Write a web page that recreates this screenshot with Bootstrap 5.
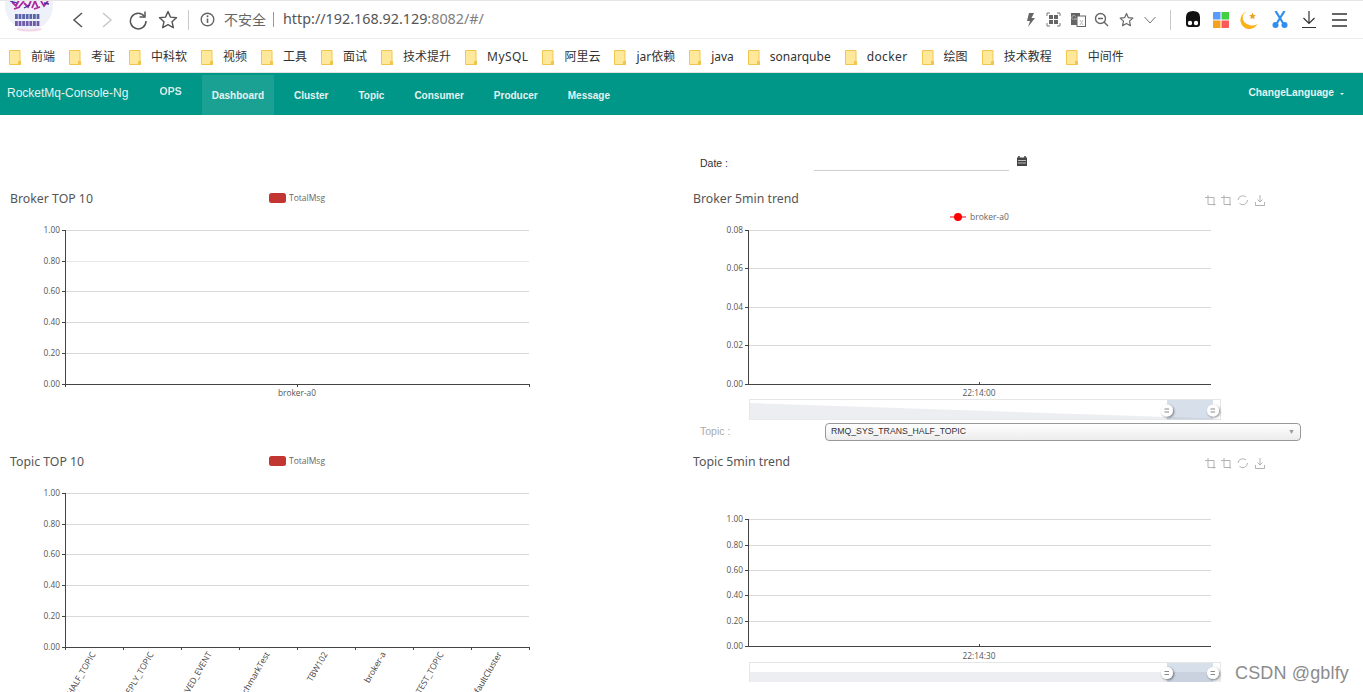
<!DOCTYPE html>
<html lang="zh">
<head>
<meta charset="utf-8">
<title>RocketMq-Console-Ng</title>
<link href="https://cdn.jsdelivr.net/npm/bootstrap@5.3.0/dist/css/bootstrap.min.css" rel="stylesheet">
<style>
html,body{height:692px;overflow:hidden;background:#fff}
body{font-family:"Noto Sans","Noto Sans CJK SC",sans-serif;color:#333}
.page-wrap{height:692px;overflow:hidden}
.tool-bar{height:39px;border-top:1px solid #e6e6e6;border-bottom:1px solid #ececec;background:#fff;overflow:hidden}
.avatar-svg{margin-top:-1px;margin-left:4px;flex:none}
.tool-ico{flex:none;display:block}
.sep-v{width:1px;height:20px;background:#c9c9c9;flex:none}
.sec-label{font-size:14px;color:#666;margin-left:9px;line-height:1}
.url-sep{width:1px;height:15px;background:#999;margin:0 9px 0 7px;flex:none}
.url-text{font-size:14.35px;color:#555;line-height:1}
.url-dim{color:#808080}
.mark-bar{height:34px;padding:3px 0 0 9px;gap:14px;background:#fff;border-bottom:1px solid #e2e2e2}
.mark-item{gap:10px;font-size:12px;color:#333;line-height:1;white-space:nowrap}
.mark-wide{letter-spacing:.4px}
.app-nav{height:42px;background:#009688;padding:0 0 0 7px;font-family:"Liberation Sans",sans-serif;font-weight:400}
.app-brand{font-size:12px;color:#e3f3f1;margin-right:31px;line-height:1;position:relative;top:-1px}
.app-ops{font-size:10.6px;color:#e9f6f4;margin-right:20px;position:relative;top:-2px;font-weight:700;opacity:.9}
.app-link{font-size:10px;font-weight:700;color:#e3f3f1;padding:0 10px;height:40px;margin-top:2px;margin-right:10px;text-decoration:none;display:flex;align-items:center}
.app-link.is-on{background:#1aa194}
.app-lang{font-size:10.2px;font-weight:700;color:#e3f3f1;margin-right:19px;position:relative;top:-1px}
.caret-mini{display:inline-block;border:2.5px solid transparent;border-top-color:#e3f3f1;border-bottom:0;margin-left:6px;vertical-align:middle}
.date-zone{height:72px;font-family:"Liberation Sans",sans-serif;font-size:10.5px;color:#333}
.date-label{margin-left:700px;width:114px;padding-top:42px;line-height:1.3}
.date-line{width:195px;height:56px;border-bottom:1px solid #cfcfcf;flex:none}
.cal-ico{margin:41px 0 0 8px;flex:none}
.pane-left{width:683px;flex:none}
.pane-right{width:680px;flex:none}
.pane-left svg,.pane-right svg{display:block}
.chart-title{font-family:"Noto Sans","Noto Sans CJK SC",sans-serif;font-size:12.3px;fill:#555}
.tick-t{font-family:"Open Sans",sans-serif;font-size:8.3px;fill:#555}
.leg-t{font-family:"Open Sans",sans-serif;font-size:8.5px;fill:#666}
.rot-t{font-family:"Open Sans",sans-serif;font-size:8.5px;fill:#444}
.topic-row{height:21px;font-family:"Liberation Sans",sans-serif}
.topic-label{margin-left:17px;width:125px;color:#aaa;line-height:1;font-size:10.5px}
.topic-select{width:476px;height:18px;padding:0 5px;border:1px solid #999;border-radius:4px;background:linear-gradient(#fff,#ececec);color:#333;line-height:1;font-size:8.7px}
.topic-arrow{color:#999;font-size:7px}
.water-mark{position:absolute;left:1235px;top:663px;font-family:"Liberation Sans",sans-serif;font-size:18px;color:#8c8c8c;line-height:1.2;letter-spacing:.15px}
</style>
</head>
<body>
<div class="page-wrap position-relative">

<div class="tool-bar d-flex align-items-center">
  <svg class="avatar-svg" width="50" height="38" viewBox="4 0 50 38">
    <circle cx="29" cy="6" r="24" fill="#eef1fa"/>
    <path d="M12 2l4 4 3-6M19 7l5-6M24 3l4 4 3-6M32 8l3-7 3 7M41 1l3 5 4-5M14 9l6-2M34 9l6-2" fill="none" stroke="#b0269a" stroke-width="1.8"/>
    <path d="M10 1l7 2M24 8l6-3M44 3l5 1" fill="none" stroke="#3a2fa8" stroke-width="1.3"/>
    <path d="M15 16.500h25" fill="none" stroke="#5a65a8" stroke-width="5" stroke-dasharray="2.800 .8"/>
    <path d="M15 23.500h25" fill="none" stroke="#6d5aa8" stroke-width="5" stroke-dasharray="2.800 .8"/>
    <path d="M17 29q12 3 24 0" fill="none" stroke="#f3d4e4" stroke-width="2"/>
  </svg>
  <svg class="tool-ico" width="14" height="18" viewBox="0 0 14 18" style="margin-left:16px"><path d="M12 2L4 9l8 7" fill="none" stroke="#555" stroke-width="1.5"/></svg>
  <svg class="tool-ico" width="14" height="18" viewBox="0 0 14 18" style="margin-left:17px"><path d="M2 2l8 7-8 7" fill="none" stroke="#c8c8c8" stroke-width="1.5"/></svg>
  <svg class="tool-ico" width="20" height="20" viewBox="0 0 20 20" style="margin-left:13px"><path d="M16.500 6.500A7.800 7.800 0 1 0 18 11" fill="none" stroke="#555" stroke-width="1.5"/><path d="M17 1.500v5.500h-5.500" fill="none" stroke="#555" stroke-width="1.500"/></svg>
  <svg class="tool-ico" width="20" height="19" viewBox="0 0 20 19" style="margin-left:10px"><path d="M10 1.500l2.500 5.600 6 .6-4.500 4 1.300 6L10 14.700l-5.300 3 1.300-6-4.500-4 6-.6z" fill="none" stroke="#555" stroke-width="1.4" stroke-linejoin="round"/></svg>
  <div class="sep-v" style="margin-left:10px"></div>
  <svg class="tool-ico" width="15" height="15" viewBox="0 0 15 15" style="margin-left:11px"><circle cx="7.500" cy="7.500" r="6.300" fill="none" stroke="#666" stroke-width="1.400"/><path d="M7.500 6.500v4.500" stroke="#666" stroke-width="1.600"/><circle cx="7.500" cy="4.300" r="1" fill="#666"/></svg>
  <span class="sec-label">不安全</span>
  <div class="url-sep"></div>
  <span class="url-text">http://192.168.92.129<span class="url-dim">:8082/#/</span></span>
  <div class="ms-auto d-flex align-items-center">
    <svg class="tool-ico" width="12" height="16" viewBox="0 0 12 16"><path d="M8 1H4L2 9h3l-2 6 7-9H6.500L9 1z" fill="#666"/></svg>
    <svg class="tool-ico" width="15" height="15" viewBox="0 0 15 15" style="margin-left:9px"><path d="M1 4V1h3M11 1h3v3M14 11v3h-3M4 14H1v-3" fill="none" stroke="#777"/><rect x="3" y="3" width="4" height="4" fill="#666"/><rect x="8" y="3" width="4" height="4" fill="#666"/><rect x="3" y="8" width="4" height="4" fill="#666"/><rect x="8" y="8" width="4" height="4" fill="#666"/></svg>
    <svg class="tool-ico" width="15" height="15" viewBox="0 0 15 15" style="margin-left:10px"><rect x="0" y="1" width="9" height="12" fill="#666"/><rect x="6" y="4" width="8.500" height="10.500" fill="#fff" stroke="#666"/><path d="M2.500 7.500a2 2 0 1 1 2-3M3 7h3M9 8l3 5M12 8l-3 5" fill="none" stroke="#bbb" stroke-width="1"/></svg>
    <svg class="tool-ico" width="15" height="15" viewBox="0 0 15 15" style="margin-left:8px"><circle cx="6.500" cy="6.500" r="5" fill="none" stroke="#666" stroke-width="1.400"/><path d="M4 6.500h5M10 10l4 4" stroke="#666" stroke-width="1.400"/></svg>
    <svg class="tool-ico" width="15" height="15" viewBox="0 0 20 19" style="margin-left:10px"><path d="M10 1.500l2.500 5.600 6 .6-4.500 4 1.300 6L10 14.700l-5.300 3 1.300-6-4.500-4 6-.6z" fill="none" stroke="#666" stroke-width="1.600" stroke-linejoin="round"/></svg>
    <svg class="tool-ico" width="12" height="8" viewBox="0 0 12 8" style="margin-left:10px"><path d="M.5 1l5.500 6 5.500-6" fill="none" stroke="#777"/></svg>
    <div class="sep-v" style="margin-left:14px"></div>
    <svg class="tool-ico" width="14" height="17" viewBox="0 0 14 17" style="margin-left:15px"><path d="M0 6q0-6 7-6t7 6v7q0 3-3 3H3q-3 0-3-3z" fill="#111"/><circle cx="4" cy="12" r="2.200" fill="#fff"/><circle cx="10" cy="12" r="2.200" fill="#fff"/></svg>
    <svg class="tool-ico" width="16" height="16" viewBox="0 0 16 16" style="margin-left:13px"><path d="M1 0h6.500v7.500H0V1a1 1 0 0 1 1-1z" fill="#5c9bf6"/><rect x="8.500" y="0" width="7.500" height="7.500" fill="#3fd13f"/><rect x="0" y="8.500" width="7.500" height="7.500" fill="#f5a01e"/><path d="M8.500 8.500H16V15a1 1 0 0 1-1 1H8.500z" fill="#fb5a5a"/></svg>
    <svg class="tool-ico" width="18" height="18" viewBox="0 0 18 18" style="margin-left:11px"><path d="M6.500 0.500a9 9 0 1 0 11 12.500A9 7.500 0 0 1 6.500 0.500z" fill="#fdb017"/><path d="M12.500 1.500l1 2.500 2.500.2-2 1.600.7 2.500-2.200-1.400-2.200 1.400.7-2.500-2-1.600 2.500-.2z" fill="#f0a020"/></svg>
    <svg class="tool-ico" width="16" height="18" viewBox="0 0 16 18" style="margin-left:14px"><path d="M3.500 0L11 12M12.500 0L5 12" stroke="#2f8fee" stroke-width="2.200"/><circle cx="3.500" cy="14" r="3" fill="#2f8fee"/><circle cx="12.500" cy="14" r="3" fill="#2f8fee"/></svg>
    <svg class="tool-ico" width="16" height="18" viewBox="0 0 16 18" style="margin-left:13px"><path d="M8 0v12M2.500 7l5.500 5.500L13.500 7M1 16.500h14" fill="none" stroke="#333" stroke-width="1.200"/></svg>
    <svg class="tool-ico" width="15" height="14" viewBox="0 0 15 14" style="margin-left:15px;margin-right:16px"><path d="M0 1h15M0 7h15M0 13h15" stroke="#333" stroke-width="1.300"/></svg>
  </div>
</div>

<div class="mark-bar d-flex align-items-center">
  <div class="mark-item d-flex align-items-center"><svg width="12" height="15" viewBox="0 0 12 15"><use href="#fold"/></svg><span>前端</span></div>
  <div class="mark-item d-flex align-items-center"><svg width="12" height="15" viewBox="0 0 12 15"><use href="#fold"/></svg><span>考证</span></div>
  <div class="mark-item d-flex align-items-center"><svg width="12" height="15" viewBox="0 0 12 15"><use href="#fold"/></svg><span>中科软</span></div>
  <div class="mark-item d-flex align-items-center"><svg width="12" height="15" viewBox="0 0 12 15"><use href="#fold"/></svg><span>视频</span></div>
  <div class="mark-item d-flex align-items-center"><svg width="12" height="15" viewBox="0 0 12 15"><use href="#fold"/></svg><span>工具</span></div>
  <div class="mark-item d-flex align-items-center"><svg width="12" height="15" viewBox="0 0 12 15"><use href="#fold"/></svg><span>面试</span></div>
  <div class="mark-item d-flex align-items-center"><svg width="12" height="15" viewBox="0 0 12 15"><use href="#fold"/></svg><span>技术提升</span></div>
  <div class="mark-item d-flex align-items-center"><svg width="12" height="15" viewBox="0 0 12 15"><use href="#fold"/></svg><span class="mark-wide">MySQL</span></div>
  <div class="mark-item d-flex align-items-center"><svg width="12" height="15" viewBox="0 0 12 15"><use href="#fold"/></svg><span>阿里云</span></div>
  <div class="mark-item d-flex align-items-center"><svg width="12" height="15" viewBox="0 0 12 15"><use href="#fold"/></svg><span>jar依赖</span></div>
  <div class="mark-item d-flex align-items-center"><svg width="12" height="15" viewBox="0 0 12 15"><use href="#fold"/></svg><span>java</span></div>
  <div class="mark-item d-flex align-items-center"><svg width="12" height="15" viewBox="0 0 12 15"><use href="#fold"/></svg><span>sonarqube</span></div>
  <div class="mark-item d-flex align-items-center"><svg width="12" height="15" viewBox="0 0 12 15"><use href="#fold"/></svg><span class="mark-wide">docker</span></div>
  <div class="mark-item d-flex align-items-center"><svg width="12" height="15" viewBox="0 0 12 15"><use href="#fold"/></svg><span>绘图</span></div>
  <div class="mark-item d-flex align-items-center"><svg width="12" height="15" viewBox="0 0 12 15"><use href="#fold"/></svg><span>技术教程</span></div>
  <div class="mark-item d-flex align-items-center"><svg width="12" height="15" viewBox="0 0 12 15"><use href="#fold"/></svg><span>中间件</span></div>
</div>

<nav class="app-nav d-flex align-items-center">
  <span class="app-brand">RocketMq-Console-Ng</span>
  <span class="app-ops">OPS</span>
  <a class="app-link is-on" href="#">Dashboard</a>
  <a class="app-link" href="#">Cluster</a>
  <a class="app-link" href="#">Topic</a>
  <a class="app-link" href="#">Consumer</a>
  <a class="app-link" href="#">Producer</a>
  <a class="app-link" href="#">Message</a>
  <span class="app-lang ms-auto">ChangeLanguage<span class="caret-mini"></span></span>
</nav>

<div class="date-zone d-flex">
  <div class="date-label">Date :</div>
  <div class="date-line"></div>
  <svg class="cal-ico" width="10" height="10" viewBox="0 0 10 10"><rect x="0" y="1.500" width="10" height="8.500" fill="#444"/><path d="M2 0v2M8 0v2" stroke="#444" stroke-width="1.500"/><path d="M1 4.500h8M1 7h8" stroke="#ddd" stroke-width=".8"/></svg>
</div>

<div class="d-flex">
  <div class="pane-left">
    <svg width="683" height="263" viewBox="0 187 683 263">
      <text class="chart-title" x="10" y="202.500">Broker TOP 10</text>
      <rect x="269" y="193" width="17" height="10" rx="2.500" fill="#c23531"/>
      <text class="leg-t" x="289" y="200.500">TotalMsg</text>
      <g stroke="#d9d9d9"><path d="M65 230.500h464M65 291.500h464M65 322.500h464M65 353.500h464"/></g>
      <path d="M65 261.500h464" stroke="#e8e8e8"/>
      <path d="M65.500 230v155M65 384.500h464M62 230.500h3M62 261.500h3M62 291.500h3M62 322.500h3M62 353.500h3M62 384.500h3M65.500 384v3M297.500 384v3M529.500 384v3" stroke="#444" fill="none"/>
      <g text-anchor="end"><text class="tick-t" x="60" y="233">1.00</text><text class="tick-t" x="60" y="264">0.80</text><text class="tick-t" x="60" y="294">0.60</text><text class="tick-t" x="60" y="325">0.40</text><text class="tick-t" x="60" y="356">0.20</text><text class="tick-t" x="60" y="387">0.00</text></g>
      <text class="tick-t" x="297" y="395.500" text-anchor="middle">broker-a0</text>
    </svg>
    <svg width="683" height="242" viewBox="0 450 683 242">
      <text class="chart-title" x="10" y="465.500">Topic TOP 10</text>
      <rect x="269" y="456" width="17" height="10" rx="2.500" fill="#c23531"/>
      <text class="leg-t" x="289" y="463.500">TotalMsg</text>
      <g stroke="#d9d9d9"><path d="M65 493.500h464M65 524.500h464M65 554.500h464M65 585.500h464M65 616.500h464"/></g>
      <path d="M65.500 493v155M65 647.500h464M62 493.500h3M62 524.500h3M62 554.500h3M62 585.500h3M62 616.500h3M62 647.500h3M65.500 647v3M123.500 647v3M181.500 647v3M239.500 647v3M297.500 647v3M355.500 647v3M413.500 647v3M471.500 647v3M529.500 647v3" stroke="#444" fill="none"/>
      <g text-anchor="end"><text class="tick-t" x="60" y="496">1.00</text><text class="tick-t" x="60" y="527">0.80</text><text class="tick-t" x="60" y="557">0.60</text><text class="tick-t" x="60" y="588">0.40</text><text class="tick-t" x="60" y="619">0.20</text><text class="tick-t" x="60" y="650">0.00</text></g>
      <g text-anchor="end">
        <text class="rot-t" transform="translate(96 654) rotate(-60)">RMQ_SYS_TRANS_HALF_TOPIC</text>
        <text class="rot-t" transform="translate(154 654) rotate(-60)">DefaultCluster_REPLY_TOPIC</text>
        <text class="rot-t" transform="translate(212 654) rotate(-60)">OFFSET_MOVED_EVENT</text>
        <text class="rot-t" transform="translate(270 654) rotate(-60)">BenchmarkTest</text>
        <text class="rot-t" transform="translate(328 654) rotate(-60)">TBW102</text>
        <text class="rot-t" transform="translate(386 654) rotate(-60)">broker-a</text>
        <text class="rot-t" transform="translate(444 654) rotate(-60)">SELF_TEST_TOPIC</text>
        <text class="rot-t" transform="translate(502 654) rotate(-60)">DefaultCluster</text>
      </g>
    </svg>
  </div>

  <div class="pane-right">
    <svg width="680" height="234" viewBox="683 187 680 234">
      <defs>
        <symbol id="fold" viewBox="0 0 12 15"><path d="M.5.500h10.500v14H.5z" fill="#ffe89a" stroke="#f1c64e"/><rect x="9" y="11" width="3" height="4" fill="#f1c64e"/></symbol>
        <g id="tbx" fill="none" stroke="#aaa" stroke-width=".9">
          <path d="M1205 197.500h9v8M1208 195v9.500h7.500"/>
          <path d="M1221 197.500h9v8M1224 195v9.500h7"/>
          <path d="M1238 200a4.800 4.800 0 0 1 8-3M1247.500 200a4.800 4.800 0 0 1-8 3.500"/>
          <path d="M1260 195v7M1257.500 199.500l2.500 2.500 2.500-2.500M1255.500 202v3.500h9V202"/>
        </g>
        <filter id="hsh" x="-50%" y="-50%" width="200%" height="200%"><feDropShadow dx="1" dy="1" stdDeviation="1" flood-color="#000" flood-opacity=".5"/></filter>
      </defs>
      <text class="chart-title" x="693" y="202.500">Broker 5min trend</text>
      <use href="#tbx"/>
      <path d="M950 217h16" stroke="#f00"/><circle cx="958" cy="217" r="4" fill="#f00"/>
      <text class="leg-t" x="970" y="220">broker-a0</text>
      <g stroke="#d9d9d9"><path d="M748 230.500h463M748 268.500h463M748 307.500h463M748 345.500h463"/></g>
      <path d="M748.500 230v155M748 384.500h463M745 230.500h3M745 268.500h3M745 307.500h3M745 345.500h3M745 384.500h3M979.500 382v3" stroke="#444" fill="none"/>
      <g text-anchor="end"><text class="tick-t" x="743" y="233">0.08</text><text class="tick-t" x="743" y="271">0.06</text><text class="tick-t" x="743" y="310">0.04</text><text class="tick-t" x="743" y="348">0.02</text><text class="tick-t" x="743" y="387">0.00</text></g>
      <text class="tick-t" x="979" y="395.500" text-anchor="middle">22:14:00</text>
      <rect x="749.500" y="399.500" width="471" height="20" fill="#fff" stroke="#e6e6e6"/>
      <path d="M750 403L1167 417v2.500H750z" fill="#eceef1"/>
      <rect x="1167" y="400" width="46" height="19" fill="#d7dfea"/>
      <path d="M1167 417l46 1.500v1h-46z" fill="#c9d2de"/>
      <circle cx="1167" cy="410.500" r="6" fill="#fff" filter="url(#hsh)"/><path d="M1164.500 409h4.500M1164.500 412h4.500" stroke="#888"/>
      <circle cx="1213" cy="410.500" r="6" fill="#fff" filter="url(#hsh)"/><path d="M1210.500 409h4.500M1210.500 412h4.500" stroke="#888"/>
    </svg>
    <div class="topic-row d-flex align-items-center">
      <span class="topic-label">Topic :</span>
      <div class="topic-select d-flex align-items-center justify-content-between">
        <span>RMQ_SYS_TRANS_HALF_TOPIC</span><span class="topic-arrow">▼</span>
      </div>
    </div>
    <svg width="680" height="250" viewBox="683 442 680 250">
      <text class="chart-title" x="693" y="465.500">Topic 5min trend</text>
      <use href="#tbx" y="263"/>
      <g stroke="#d9d9d9"><path d="M748 519.500h463M748 545.500h463M748 570.500h463M748 595.500h463M748 621.500h463"/></g>
      <path d="M748.500 519v128M748 646.500h463M745 519.500h3M745 545.500h3M745 570.500h3M745 595.500h3M745 621.500h3M745 646.500h3M979.500 644v3" stroke="#444" fill="none"/>
      <g text-anchor="end"><text class="tick-t" x="743" y="522">1.00</text><text class="tick-t" x="743" y="548">0.80</text><text class="tick-t" x="743" y="573">0.60</text><text class="tick-t" x="743" y="598">0.40</text><text class="tick-t" x="743" y="624">0.20</text><text class="tick-t" x="743" y="649">0.00</text></g>
      <text class="tick-t" x="979" y="658.500" text-anchor="middle">22:14:30</text>
      <rect x="749.500" y="662.500" width="471" height="19" fill="#fff" stroke="#e6e6e6"/>
      <rect x="750" y="672" width="470" height="10" fill="#eceef1"/>
      <rect x="1167" y="663" width="46" height="19" fill="#d7dfea"/>
      <rect x="1167" y="672" width="46" height="10" fill="#c9d2de"/>
      <circle cx="1167" cy="673" r="6" fill="#fff" filter="url(#hsh)"/><path d="M1164.500 671.500h4.500M1164.500 674.500h4.500" stroke="#888"/>
      <circle cx="1213" cy="673" r="6" fill="#fff" filter="url(#hsh)"/><path d="M1210.500 671.500h4.500M1210.500 674.500h4.500" stroke="#888"/>
    </svg>
  </div>
</div>

<div class="water-mark">CSDN @gblfy</div>
</div>
<script src="https://cdn.jsdelivr.net/npm/bootstrap@5.3.0/dist/js/bootstrap.bundle.min.js"></script>
</body>
</html>
